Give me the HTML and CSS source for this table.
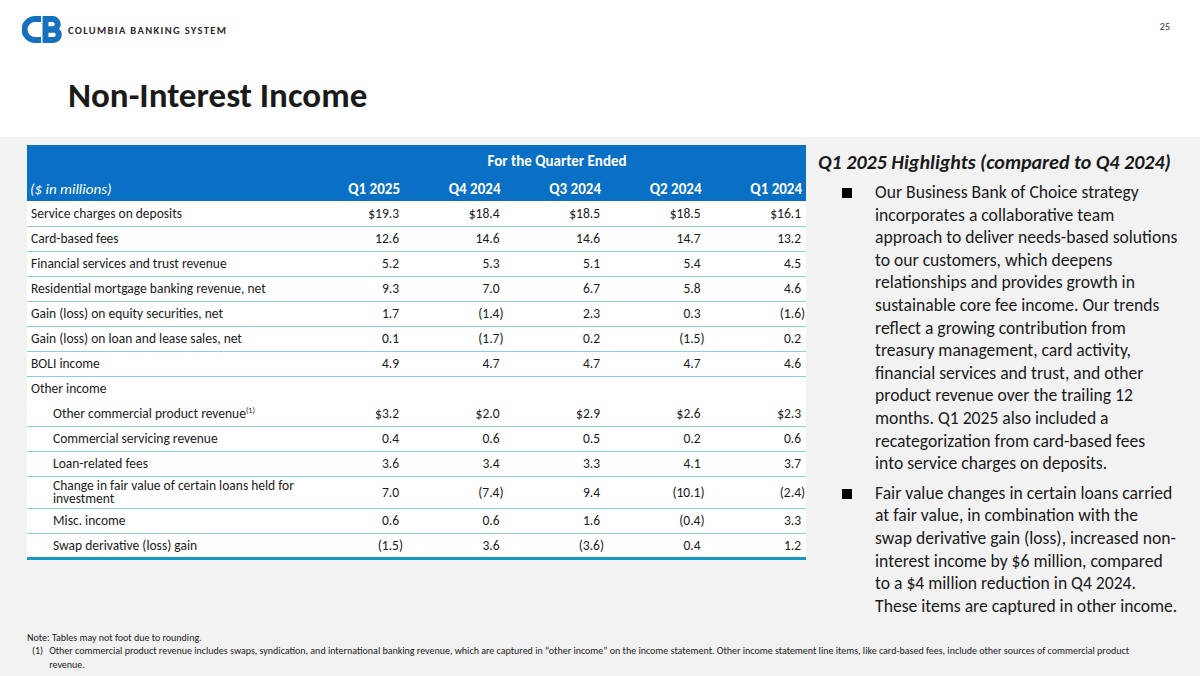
FILE: index.html
```html
<!DOCTYPE html>
<html lang="en">
<head>
<meta charset="utf-8">
<title>Non-Interest Income</title>
<link rel="stylesheet" href="styles.css">
</head>
<body>
<div class="slide">
  <header class="top">
    <div class="brand">
      <svg class="logo" width="40" height="27" viewBox="0 0 40 27" aria-hidden="true">
        <path d="M19 3 H13 A10 10 0 0 0 13 24 H19" fill="none" stroke="#1570c0" stroke-width="6"/>
        <path d="M23.5 0 V27" stroke="#1570c0" stroke-width="6"/>
        <path d="M23 3 H30.5 A5 5 0 0 1 30.5 13.5 H23" fill="none" stroke="#1570c0" stroke-width="6"/>
        <path d="M23 13.5 H31.5 A5.25 5.25 0 0 1 31.5 24 H23" fill="none" stroke="#1570c0" stroke-width="6"/>
      </svg>
      <span class="brand-name">COLUMBIA BANKING SYSTEM</span>
    </div>
    <div class="page-num">25</div>
  </header>
  <h1 class="title">Non-Interest Income</h1>
  <section class="content">
    <div class="row">
      <table class="fin">
        <colgroup>
          <col class="c-label"><col class="c-q1"><col class="c-q"><col class="c-q"><col class="c-q"><col class="c-q">
        </colgroup>
        <thead>
          <tr class="h1"><th></th><th colspan="5" class="center">For the Quarter Ended</th></tr>
          <tr class="h2"><th class="units">($ in millions)</th><th>Q1 2025</th><th>Q4 2024</th><th>Q3 2024</th><th>Q2 2024</th><th>Q1 2024</th></tr>
        </thead>
        <tbody>
          <tr><td>Service charges on deposits</td><td>$19.3</td><td>$18.4</td><td>$18.5</td><td>$18.5</td><td>$16.1</td></tr>
          <tr><td>Card-based fees</td><td>12.6</td><td>14.6</td><td>14.6</td><td>14.7</td><td>13.2</td></tr>
          <tr><td>Financial services and trust revenue</td><td>5.2</td><td>5.3</td><td>5.1</td><td>5.4</td><td>4.5</td></tr>
          <tr><td>Residential mortgage banking revenue, net</td><td>9.3</td><td>7.0</td><td>6.7</td><td>5.8</td><td>4.6</td></tr>
          <tr><td>Gain (loss) on equity securities, net</td><td>1.7</td><td class="neg">(1.4)</td><td>2.3</td><td>0.3</td><td class="neg">(1.6)</td></tr>
          <tr><td>Gain (loss) on loan and lease sales, net</td><td>0.1</td><td class="neg">(1.7)</td><td>0.2</td><td class="neg">(1.5)</td><td>0.2</td></tr>
          <tr><td>BOLI income</td><td>4.9</td><td>4.7</td><td>4.7</td><td>4.7</td><td>4.6</td></tr>
          <tr class="group"><td>Other income</td><td></td><td></td><td></td><td></td><td></td></tr>
          <tr><td class="ind">Other commercial product revenue<sup>(1)</sup></td><td>$3.2</td><td>$2.0</td><td>$2.9</td><td>$2.6</td><td>$2.3</td></tr>
          <tr><td class="ind">Commercial servicing revenue</td><td>0.4</td><td>0.6</td><td>0.5</td><td>0.2</td><td>0.6</td></tr>
          <tr><td class="ind">Loan-related fees</td><td>3.6</td><td>3.4</td><td>3.3</td><td>4.1</td><td>3.7</td></tr>
          <tr class="tall"><td class="ind">Change in fair value of certain loans held for investment</td><td>7.0</td><td class="neg">(7.4)</td><td>9.4</td><td class="neg">(10.1)</td><td class="neg">(2.4)</td></tr>
          <tr><td class="ind">Misc. income</td><td>0.6</td><td>0.6</td><td>1.6</td><td class="neg">(0.4)</td><td>3.3</td></tr>
          <tr class="last"><td class="ind">Swap derivative (loss) gain</td><td class="neg">(1.5)</td><td>3.6</td><td class="neg">(3.6)</td><td>0.4</td><td>1.2</td></tr>
        </tbody>
      </table>
      <aside class="highlights">
        <h2>Q1 2025 Highlights (compared to Q4 2024)</h2>
        <ul>
          <li>Our Business Bank of Choice strategy incorporates a collaborative team approach to deliver needs-based solutions to our customers, which deepens relationships and provides growth in sustainable core fee income. Our trends reflect a growing contribution from treasury management, card activity, financial services and trust, and other product revenue over the trailing 12 months. Q1 2025 also included a recategorization from card-based fees<br>into service charges on deposits.</li>
          <li>Fair value changes in certain loans carried at fair value, in combination with the<br>swap derivative gain (loss), increased non-interest income by $6 million, compared<br>to a $4 million reduction in Q4 2024.<br>These items are captured in other income.</li>
        </ul>
      </aside>
    </div>
    <footer class="notes">
      <p>Note: Tables may not foot due to rounding.</p>
      <div class="fn"><span class="fn-num">(1)</span><span>Other commercial product revenue includes swaps, syndication, and international banking revenue, which are captured in “other income” on the income statement. Other income statement line items, like card-based fees, include other sources of commercial product revenue.</span></div>
    </footer>
  </section>
</div>
</body>
</html>
```

FILE: styles.css
```css
* { box-sizing: border-box; }
html, body { margin: 0; padding: 0; }
body {
  width: 1200px;
  height: 676px;
  overflow: hidden;
  background: #ffffff;
  font-family: Carlito, Lato, "Open Sans", sans-serif;
  color: #1a1a1a;
}
.slide { width: 1200px; height: 676px; display: flex; flex-direction: column; }
.top {
  height: 56px;
  display: flex;
  justify-content: space-between;
  align-items: flex-start;
  padding: 16px 30px 0 22px;
}
.brand { display: flex; align-items: center; gap: 6px; }
.logo { display: block; }
.brand-name {
  font-size: 10.5px;
  font-weight: 700;
  letter-spacing: 1.35px;
  color: #2a2a2a;
  padding-top: 1px;
}
.page-num { font-size: 10px; color: #333; padding-top: 4px; }
.title {
  margin: 0;
  height: 81px;
  padding: 19px 0 0 68px;
  font-size: 35px;
  font-weight: 700;
  color: #1a1a1a;
  line-height: 40px;
}
.content {
  flex: 1;
  background: #f2f2f2;
  padding: 8px 0 0 27px;
  display: flex;
  flex-direction: column;
}
.row { display: flex; gap: 12px; align-items: flex-start; }
.fin {
  border-collapse: collapse;
  width: 779px;
  font-size: 13.5px;
  color: #1a1a1a;
  background: #ffffff;
  table-layout: fixed;
}
.c-label { width: 282px; }
.c-q1 { width: 95px; }
.c-q { width: 100.5px; }
.fin thead tr { background: #0a70c6; color: #ffffff; }
.fin th {
  font-weight: 700;
  text-align: right;
  padding: 0 4px 0 3px;
  font-size: 15px;
  white-space: nowrap;
}
.fin .h1 th { height: 31px; vertical-align: middle; }
.fin .h1 .center { text-align: center; }
.fin .h2 th { height: 25px; vertical-align: middle; }
.fin .h2 .units { text-align: left; font-style: italic; font-weight: 400; }
.fin td {
  height: 25px;
  padding: 0 5px 0 4px;
  text-align: right;
  border-bottom: 1px solid #8ccfe3;
  vertical-align: middle;
  white-space: nowrap;
  line-height: 15px;
}
.fin td:first-child { text-align: left; }
.fin td.ind { padding-left: 26px; white-space: normal; line-height: 13px; }
.fin td.neg { padding-right: 1px; }
.fin .group td { border-bottom: none; }
.fin .tall td { height: 32px; }
.fin .last td { border-bottom: 3px solid #159ac2; }
.fin sup { font-size: 8px; vertical-align: 5px; line-height: 0; }
.highlights { flex: 1; padding-top: 5px; }
.highlights h2 {
  margin: 0 0 7px 0;
  font-size: 20px;
  font-weight: 700;
  font-style: italic;
  color: #1a1a1a;
  line-height: 24px;
}
.highlights ul { list-style: none; margin: 0; padding: 0 0 0 57px; }
.highlights li {
  position: relative;
  font-size: 17.6px;
  line-height: 22.6px;
  margin-bottom: 7px;
  color: #1a1a1a;
  padding-right: 20px;
}
.highlights li::before {
  content: "";
  position: absolute;
  left: -33px;
  top: 7px;
  width: 10px;
  height: 10px;
  background: #000;
}
.notes {
  margin-top: auto;
  padding: 0 58px 5px 0;
  font-size: 10px;
  line-height: 13.5px;
  color: #1a1a1a;
}
.notes p { margin: 0; }
.fn { display: flex; gap: 6px; padding-left: 5px; }
.fn-num { flex: none; }
```
